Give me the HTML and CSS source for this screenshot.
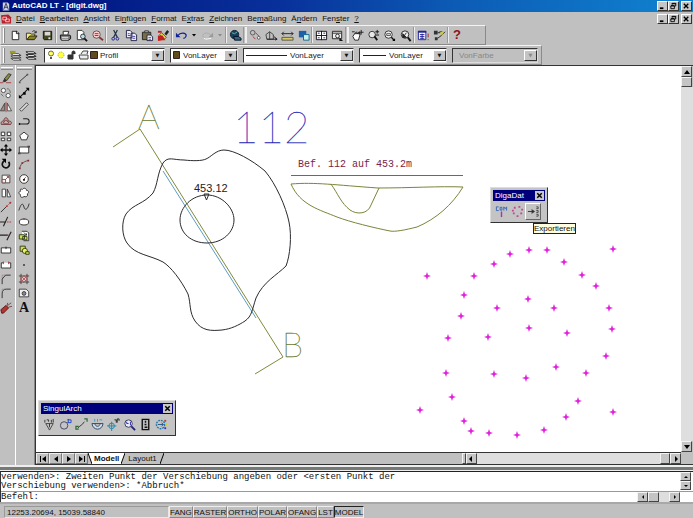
FILE: index.html
```html
<!DOCTYPE html>
<html lang="de">
<head>
<meta charset="utf-8">
<title>AutoCAD LT - [digit.dwg]</title>
<link rel="stylesheet" href="styles.css">
</head>
<body>
<div class="app">
  <header class="titlebar">
    <svg class="app-icon" viewBox="0 0 10 12"><path d="M1 1h6l2 2v8H1z" fill="#c8d0e8"/><path d="M2 10L5 2l3 8M3 7h4" stroke="#223" fill="none"/></svg>
    <h1>AutoCAD LT - [digit.dwg]</h1>
    <div class="winbtns">
      <button aria-label="Minimieren"><svg viewBox="0 0 10 9"><path d="M2 7h4" stroke="#000" stroke-width="2"/></svg></button><button aria-label="Wiederherstellen"><svg viewBox="0 0 10 9"><path d="M3.500 3V1.500h4v3H6M2 4.500h4v3H2zM3 2h5M2 4h4" stroke="#000" fill="none"/></svg></button><button class="close" aria-label="Schließen"><svg viewBox="0 0 10 9"><path d="M2 2l5 5M7 2L2 7" stroke="#000" stroke-width="1.500"/></svg></button>
    </div>
  </header>
  <nav class="menubar">
    <svg class="doc-icon" viewBox="0 0 12 12"><path d="M0 2l8-1 3 3v7H1z" fill="#b8202c"/><path d="M2 4h4v3H2zM5 6h4v3H5z" fill="none" stroke="#f4c8c8"/></svg>
    <button><u>D</u>atei</button><button><u>B</u>earbeiten</button><button><u>A</u>nsicht</button><button>Ei<u>n</u>fügen</button><button><u>F</u>ormat</button><button>E<u>x</u>tras</button><button><u>Z</u>eichnen</button><button>Be<u>m</u>aßung</button><button>Ä<u>n</u>dern</button><button>Fen<u>s</u>ter</button><button><u>?</u></button>
    <div class="winbtns">
      <button aria-label="Minimieren"><svg viewBox="0 0 10 9"><path d="M2 7h4" stroke="#000" stroke-width="2"/></svg></button><button aria-label="Wiederherstellen"><svg viewBox="0 0 10 9"><path d="M3.500 3V1.500h4v3H6M2 4.500h4v3H2zM3 2h5M2 4h4" stroke="#000" fill="none"/></svg></button><button class="close" aria-label="Schließen"><svg viewBox="0 0 10 9"><path d="M2 2l5 5M7 2L2 7" stroke="#000" stroke-width="1.500"/></svg></button>
    </div>
  </nav>

  <div class="toolbar standard">
    <i class="grip"></i>
    <button aria-label="Neu"><svg viewBox="0 0 14 14"><path d="M3.500 2.500h5l2 2v7h-7z" fill="#fff" stroke="#222"/><path d="M8 2v3h3" fill="none" stroke="#222"/></svg></button>
    <button aria-label="Öffnen"><svg viewBox="0 0 14 14"><path d="M1.500 11.500v-7h4l1 1h4v2" fill="#f4ec80" stroke="#333"/><path d="M2 11.500l3-4h8l-3 4z" fill="#8c8420" stroke="#222"/><path d="M8 3c1-2 3-1 4 1m0-2v2h-2" fill="none" stroke="#222"/></svg></button>
    <button aria-label="Speichern"><svg viewBox="0 0 14 14"><path d="M2.500 2.500h9v9h-8l-1-1z" fill="#444822" stroke="#111"/><path d="M4 3h6v4H4z" fill="#d8d8d8"/><path d="M8 9h2v2H8z" fill="#eee"/></svg></button>
    <i class="sep"></i>
    <button aria-label="Drucken"><svg viewBox="0 0 14 14"><path d="M4.500 6V2.500h6L9.500 6" fill="#fff" stroke="#222"/><path d="M1.500 6.500h10l1 1v3l-2 1.500h-8l-1-2z" fill="#777" stroke="#111"/><path d="M3 9h7M3 11h7" stroke="#eee"/></svg></button>
    <button aria-label="Seitenansicht"><svg viewBox="0 0 14 14"><path d="M2.500 1.500h5l2 2v8h-7z" fill="#fff" stroke="#333"/><circle cx="8.500" cy="8" r="2.500" fill="#b8dce8" stroke="#333"/><path d="M10 10l3 3" stroke="#111" stroke-width="2"/></svg></button>
    <button aria-label="Suchen"><svg viewBox="0 0 14 14"><circle cx="6" cy="6" r="4" fill="#fcc" stroke="#555"/><path d="M4 5h4M4 7h4" stroke="#b22"/><path d="M9 9l4 3" stroke="#833" stroke-width="2"/></svg></button>
    <i class="sep"></i>
    <button aria-label="Ausschneiden"><svg viewBox="0 0 14 14"><path d="M5 1l4 8M9 1L5 9" stroke="#234" stroke-width="1.300"/><circle cx="4.500" cy="10.500" r="1.500" fill="none" stroke="#229"/><circle cx="9" cy="10.500" r="1.500" fill="none" stroke="#229"/></svg></button>
    <button aria-label="Kopieren"><svg viewBox="0 0 14 14"><path d="M1.500 1.500h4l2 2v6h-6zM6.500 4.500h4l2 2v6h-6z" fill="#eef" stroke="#224"/><path d="M3 5h2M3 7h3M8 8h3M8 10h3" stroke="#44a"/></svg></button>
    <button aria-label="Einfügen"><svg viewBox="0 0 14 14"><path d="M1.500 3.500h9v8h-9z" fill="#776f48" stroke="#222"/><path d="M4 2h4v2H4z" fill="#ccc" stroke="#333"/><path d="M6.500 6.500h4l2 2v4h-6z" fill="#fff" stroke="#224"/><path d="M8 9h3M8 11h3" stroke="#44a"/></svg></button>
    <button aria-label="Eigenschaften anpassen"><svg viewBox="0 0 14 14"><path d="M8 5l3-4 2 2-3 4z" fill="#222"/><path d="M5 4l5 5-2 2-5-5z" fill="#e8d840" stroke="#554"/><path d="M1 7h5l3 5H6l-5 1z" fill="#c02020"/><path d="M1 2h4v2H1z" fill="#c02020"/></svg></button>
    <i class="sep"></i>
    <button aria-label="Rückgängig"><svg viewBox="0 0 14 14"><path d="M1 4v5h5z" fill="#129"/><path d="M3 7c3-4 9-3 9 0 0 1-1 3-3 3" fill="none" stroke="#129" stroke-width="1.300"/></svg></button>
    <button class="drop" aria-label="Rückgängig Liste"><svg viewBox="0 0 8 14"><path d="M2 6h4L4 8.500z"/></svg></button>
    <button aria-label="Wiederholen"><svg viewBox="0 0 14 14"><path d="M13 4v5H8z" fill="#999"/><path d="M11 7c-3-4-9-3-9 0 0 1 1 3 3 3" fill="none" stroke="#aaa"/><path d="M3 10c3 2 5 0 8 0" fill="none" stroke="#fff"/></svg></button>
    <button class="drop" aria-label="Wiederholen Liste"><svg viewBox="0 0 8 14"><path d="M2 6h4L4 8.500z" fill="#888"/></svg></button>
    <i class="sep"></i>
    <button aria-label="Internet"><svg viewBox="0 0 14 14"><circle cx="6" cy="6" r="4.500" fill="#18405c" stroke="#123"/><path d="M3 4l3 1 3-2" stroke="#6bb" fill="none"/><path d="M5 8h5l3 2v2H6z" fill="#3a6080" stroke="#012"/></svg></button>
    <i class="sep wide"></i>
    <button aria-label="Objektfang"><svg viewBox="0 0 14 14"><circle cx="4" cy="4" r="2.500" fill="none" stroke="#555"/><path d="M7 4l4 4M4 8l3 3" stroke="#a33"/><circle cx="10.500" cy="9.500" r="1.500" fill="#fff" stroke="#555"/></svg></button>
    <button aria-label="BKS"><svg viewBox="0 0 14 14"><path d="M1 6l4-3 4 3v5H2zM5 3v8M9 7l3 4" fill="none" stroke="#444"/><path d="M2 11h11M11 9l2 2-2 1" fill="none" stroke="#222"/></svg></button>
    <button aria-label="Abstand"><svg viewBox="0 0 14 14"><path d="M1 5h12M1 5l2-2M1 5l2 2M13 5l-2-2M13 5l-2 2" stroke="#222"/><path d="M1 9h12v3H1z" fill="#d8c868" stroke="#554"/></svg></button>
    <button aria-label="Zeichnungsreihenfolge"><svg viewBox="0 0 14 14"><path d="M2 2h8v7H2z" fill="#1c60a8"/><path d="M7 6h6v6H7z" fill="#c8f0f0" stroke="#168"/></svg></button>
    <i class="sep"></i>
    <button aria-label="Ansichtsfenster"><svg viewBox="0 0 14 14"><path d="M1.500 2.500h11v9h-11z" fill="#fff" stroke="#111"/><path d="M7 2v10M1 7h12" stroke="#111"/><path d="M3 4.500h2M9 4.500h2M3 9.500h2M9 9.500h2" stroke="#228"/></svg></button>
    <button aria-label="Benannte Ansichten"><svg viewBox="0 0 14 14"><path d="M1.500 2.500h10v8h-10z" fill="#eee" stroke="#222"/><path d="M2 4.500h9" stroke="#222"/><circle cx="7" cy="7.500" r="2" fill="#fff" stroke="#222"/><path d="M9 9l4 4h-4z" fill="#111"/></svg></button>
    <i class="sep wide"></i>
    <button aria-label="Pan"><svg viewBox="0 0 14 14"><path d="M2 8l2-3h6l-2 7H4z" fill="#fff" stroke="#222"/><path d="M4 5l2-2 1 2 2-2v3M1 3h3M11 1v5M8.500 3.500h5" fill="none" stroke="#222"/></svg></button>
    <button aria-label="Zoom Echtzeit"><svg viewBox="0 0 14 14"><circle cx="5.500" cy="6" r="3.500" fill="#e8e8e8" stroke="#333"/><path d="M8 8l3 4" stroke="#111" stroke-width="2"/><path d="M9 3h4M11 1v4M9 6.500h4" stroke="#111"/></svg></button>
    <button aria-label="Zoom Fenster"><svg viewBox="0 0 14 14"><circle cx="6" cy="6" r="4" fill="#eee" stroke="#333"/><path d="M4 5h4v2H4z" fill="none" stroke="#555"/><path d="M9 9l3 3" stroke="#111" stroke-width="1.500"/><path d="M13 10v3h-3z"/></svg></button>
    <button aria-label="Zoom Vorher"><svg viewBox="0 0 14 14"><circle cx="6.500" cy="6" r="4" fill="#eee" stroke="#222"/><path d="M4 5v4h4zM5 8l3-4" fill="#222" stroke="#222"/><path d="M9.500 9l3 4" stroke="#111" stroke-width="2"/></svg></button>
    <i class="sep"></i>
    <button aria-label="Eigenschaften"><svg viewBox="0 0 14 14"><path d="M1.500 2.500h8v9h-8z" fill="#fff" stroke="#229"/><path d="M1 3h9" stroke="#229" stroke-width="2"/><path d="M3 6h5M3 8h5M3 10h5M5.500 5v6" stroke="#229"/><path d="M12 5v4M12 11v1" stroke="#922"/></svg></button>
    <button aria-label="Design Center"><svg viewBox="0 0 14 14"><path d="M1 2h4v4H1zM2 9h3v3H2z" fill="#333"/><path d="M5 4h3M5 10l4-3 4-4M7 3h3" stroke="#222" fill="none"/><path d="M8 3h3v3H8z" fill="#cc4"/></svg></button>
    <i class="sep"></i>
    <button class="help" aria-label="Hilfe">?</button>
  </div>

  <div class="toolbar props">
    <i class="grip"></i>
    <button aria-label="Layer des Objekts"><svg viewBox="0 0 14 14"><path d="M2 5h8l3 2H5zM2 7.500h8l3 2H5zM2 10h8l3 2H5z" fill="#fff" stroke="#444"/><path d="M1 2h6v3H1z" fill="#9a9a30"/></svg></button>
    <button aria-label="Layer"><svg viewBox="0 0 14 14"><path d="M1 3h8l3 2H4zM1 6h8l3 2H4zM1 9h8l3 2H4z" fill="#fff" stroke="#222"/></svg></button>
    <div class="combo layer"><select aria-label="Layer"><option>Profil</option></select>
      <svg class="lead" viewBox="0 0 54 12"><circle cx="6" cy="4.500" r="2.500" fill="#ffff60" stroke="#665"/><path d="M5 8h2v2H5z" fill="#555"/><circle cx="16" cy="6" r="3" fill="#ffff40" stroke="#998" stroke-dasharray="1 1"/><path d="M23 6h5v4h-5zM27 6V3.500c0-2 3-2 3 0V5" fill="#333" stroke="#333"/><path d="M36 5l2-3h5l-1 3M34 6h9v4h-8z" fill="#eee" stroke="#444"/><path d="M45.500 2.500h7v7h-7z" fill="#5f4b1c" stroke="#322"/></svg></div>
    <div class="combo color"><select aria-label="Farbe"><option>VonLayer</option></select>
      <svg class="lead" viewBox="0 0 12 12"><path d="M2.500 2.500h6v7h-6z" fill="#5f4b1c" stroke="#322"/></svg></div>
    <div class="combo ltype"><select aria-label="Linientyp"><option>VonLayer</option></select>
      <svg class="lead" viewBox="0 0 44 12"><path d="M2 6.500h41" stroke="#222"/></svg></div>
    <div class="combo lweight"><select aria-label="Linienstärke"><option>VonLayer</option></select>
      <svg class="lead" viewBox="0 0 28 12"><path d="M3 6.500h23" stroke="#222"/></svg></div>
    <div class="combo pstyle"><select aria-label="Plotstil" disabled><option>VonFarbe</option></select></div>
  </div>

  <main class="work">
    <div class="side modify">
      <i class="hgrip"></i>
      <div class="tools">
      <button aria-label="Löschen"><svg viewBox="0 0 14 14"><path d="M5 8l5-6 3 1-5 7z" fill="#8a8a3c" stroke="#333"/><path d="M5 8l3 2-2 2-3-1z" fill="#333"/><path d="M0 12.500h4M7 12.500h6" stroke="#a33"/></svg></button>
      <button aria-label="Kopieren"><svg viewBox="0 0 14 14"><circle cx="4" cy="4" r="2.500" fill="#fff" stroke="#444"/><circle cx="9.500" cy="10" r="2.500" fill="#fff" stroke="#444"/><path d="M8 2c3 0 4 2 4 5M1 8l3 3" fill="none" stroke="#666"/></svg></button>
      <button aria-label="Spiegeln"><svg viewBox="0 0 14 14"><path d="M5.500 2.500v9h-5z" fill="#a88" stroke="#444"/><path d="M8.500 2.500v9h5z" fill="#eee" stroke="#444"/><path d="M7 1v12" stroke="#a33"/></svg></button>
      <button aria-label="Versetzen"><svg viewBox="0 0 14 14"><path d="M1.500 11c-1-4 2-4 3-4 0-5 5-5 5 0 3 0 5 1 3 4z" fill="#c99" stroke="#633"/><path d="M4 9.500h6c0-2-1-2-2-2 0-2-2-2-2 0-1 0-2 1-2 2z" fill="#eee" stroke="#633"/></svg></button>
      <button aria-label="Reihe"><svg viewBox="0 0 14 14"><path d="M1.500 2.500h4v4h-4zM8.500 2.500h4v4h-4zM1.500 9.500h4v3h-4zM8.500 9.500h4v3h-4z" fill="#fff" stroke="#222"/></svg></button>
      <button aria-label="Schieben"><svg viewBox="0 0 14 14"><path d="M7 2v10M2 7h10" stroke="#111" stroke-width="1.500"/><path d="M7 0l2.500 3h-5zM7 14l2.500-3h-5zM0 7l3-2.500v5zM14 7l-3-2.500v5z"/></svg></button>
      <button aria-label="Drehen"><svg viewBox="0 0 14 14"><path d="M5 3.500a4.200 4.200 0 1 0 5 1" fill="none" stroke="#111" stroke-width="2"/><path d="M2 1h5v5z"/></svg></button>
      <button aria-label="Varia"><svg viewBox="0 0 14 14"><path d="M2.500 2.500h9v9h-9z" fill="#fff" stroke="#433"/><path d="M2.500 7.500h4v4h-4z" fill="#eee" stroke="#744"/><path d="M6 8l4-4M8 4h2v2" fill="none" stroke="#744"/></svg></button>
      <button aria-label="Strecken"><svg viewBox="0 0 14 14"><path d="M2.500 2.500h4v9h-4z" fill="#fff" stroke="#333"/><path d="M8.500 2.500v9h4z" fill="#fff" stroke="#333"/></svg></button>
      <button aria-label="Länge"><svg viewBox="0 0 14 14"><path d="M1 13l7-7" stroke="#222"/><path d="M8 6l4-4" stroke="#a33" stroke-dasharray="1 1"/><circle cx="12" cy="2" r="1.200" fill="#a33"/><circle cx="8" cy="6" r="1" fill="#a33"/></svg></button>
      <button aria-label="Stutzen"><svg viewBox="0 0 14 14"><path d="M0 7h7M4 12L9 1" stroke="#222" stroke-width="1.300"/><path d="M8 7h6" stroke="#a33" stroke-dasharray="2 1"/></svg></button>
      <button aria-label="Dehnen"><svg viewBox="0 0 14 14"><path d="M0 6h9M8 12l5-10" stroke="#222" stroke-width="1.300"/><path d="M8 6h3" stroke="#a33"/></svg></button>
      <button aria-label="Bruch am Punkt"><svg viewBox="0 0 14 14"><path d="M1.500 4.500h11v6h-11z" fill="#fff" stroke="#222"/><path d="M7 3v3" stroke="#222"/></svg></button>
      <button aria-label="Bruch"><svg viewBox="0 0 14 14"><path d="M4 4.500H1.500v6h11v-6H10" fill="#fff" stroke="#222"/><path d="M4 3v3M10 3v3" stroke="#a33"/></svg></button>
      <button aria-label="Fase"><svg viewBox="0 0 14 14"><path d="M2.500 13V7l4-4.500h6" fill="none" stroke="#222"/><path d="M2.500 6V2.500H6" fill="none" stroke="#a55" stroke-dasharray="1 1"/></svg></button>
      <button aria-label="Abrunden"><svg viewBox="0 0 14 14"><path d="M2.500 13V8c0-4 2-5.500 5-5.500h5" fill="none" stroke="#222"/><path d="M2.500 6V2.500H6" fill="none" stroke="#777" stroke-dasharray="1 1"/></svg></button>
      <button aria-label="Ursprung"><svg viewBox="0 0 14 14"><path d="M1 9l6-5 3 3-6 6H2z" fill="#b33434" stroke="#511"/><path d="M8 5l1-4M10 6l4-1M9 4l4-3" stroke="#733"/></svg></button>
      </div>
    </div>
    <div class="side draw">
      <i class="hgrip"></i>
      <div class="tools">
      <button aria-label="Linie"><svg viewBox="0 0 14 14"><path d="M2 11l9-8" stroke="#222"/><path d="M1 11h2v2H1zM10 2h2v2h-2z" fill="#555"/></svg></button>
      <button aria-label="Konstruktionslinie"><svg viewBox="0 0 14 14"><path d="M2 12L12 2" stroke="#111" stroke-width="1.300"/><path d="M1 13V9l4 4zM13 1v4L9 1zM6 6h3v3H6z"/></svg></button>
      <button aria-label="Doppellinie"><svg viewBox="0 0 14 14"><path d="M2 10l8-8 2 2-8 8z" fill="#ddd" stroke="#333"/></svg></button>
      <button aria-label="Polylinie"><svg viewBox="0 0 14 14"><path d="M6 4.500h4c4 0 4 6 0 6H1" fill="none" stroke="#222" stroke-width="1.200"/><path d="M1 9l2 1.500L1 12z"/></svg></button>
      <button aria-label="Polygon"><svg viewBox="0 0 14 14"><path d="M7 2.500l5 4-2 5H4l-2-5z" fill="#fff" stroke="#222"/></svg></button>
      <button aria-label="Rechteck"><svg viewBox="0 0 14 14"><path d="M1.500 3.500h11v7h-11z" fill="#fff" stroke="#222"/><path d="M0 10h3v2H0zM11 2h3v2h-3z" fill="#544"/></svg></button>
      <button aria-label="Bogen"><svg viewBox="0 0 14 14"><path d="M2 13c0-5 4-9 10-10" fill="none" stroke="#733"/><path d="M1 11h2v2H1zM4 5h2v2H4zM11 2h2v2h-2z" fill="#733"/></svg></button>
      <button aria-label="Kreis"><svg viewBox="0 0 14 14"><circle cx="7" cy="7" r="5" fill="#fff" stroke="#222"/><path d="M6 8l3-3" stroke="#733"/><path d="M6 7h2v2H6z"/></svg></button>
      <button aria-label="Revisionswolke"><svg viewBox="0 0 14 14"><path d="M5 3c2-3 5-1 5 1 3 0 3 3 1 4 1 3-2 4-4 3-2 2-5 1-4-2-3-1-2-4 0-4-1-3 1-3 2-2z" fill="#fff" stroke="#222"/></svg></button>
      <button aria-label="Spline"><svg viewBox="0 0 14 14"><path d="M1 11C4 1 6 3 7 7s4 4 6-4" fill="none" stroke="#222"/></svg></button>
      <button aria-label="Ellipse"><svg viewBox="0 0 14 14"><ellipse cx="7" cy="7" rx="5.500" ry="3.500" fill="#fff" stroke="#222"/><path d="M6 3h2v1H6z" fill="#733"/></svg></button>
      <button aria-label="Block einfügen"><svg viewBox="0 0 14 14"><path d="M4.500 1.500h6l2 2v9h-6" fill="#fff" stroke="#222"/><path d="M1.500 5.500h6v5h-6zM5.500 7.500h5v4h-5z" fill="#d4dc50" stroke="#231"/><path d="M7 3l3 3M8 6h2V4" fill="none" stroke="#222"/></svg></button>
      <button aria-label="Block erstellen"><svg viewBox="0 0 14 14"><path d="M2.500 2.500h6v6h-6z" fill="#d4dc50" stroke="#231"/><circle cx="8" cy="8" r="3" fill="#ecf070" stroke="#231"/><path d="M9 9h4v3H9z" fill="#d4dc50" stroke="#231"/></svg></button>
      <button aria-label="Punkt"><svg viewBox="0 0 14 14"><path d="M6 6h2v2H6z" fill="#222"/></svg></button>
      <button aria-label="Schraffur"><svg viewBox="0 0 14 14"><path d="M3 3h8v8H3z" fill="#e0c4c8"/><path d="M3.500 1v12M10.500 1v12M1 3.500h12M1 10.500h12" stroke="#333"/><path d="M3 7l4-4M3 11l8-8M7 11l4-4M3 7l4 4M3 3l8 8M7 3l4 4" stroke="#a55"/></svg></button>
      <button aria-label="Region"><svg viewBox="0 0 14 14"><path d="M1.500 2.500h8l3 3v6h-11z" fill="#eee" stroke="#333"/><circle cx="7" cy="7.500" r="2.200" fill="#889" stroke="#333"/></svg></button>
      <button class="mtext" aria-label="Absatztext">A</button>
      </div>
    </div>

    <section class="view">
      <div class="canvas">
        <svg class="drawing">
          <defs>
            <marker id="pt" viewBox="-4 -4 8 8" markerWidth="8" markerHeight="8" markerUnits="userSpaceOnUse">
              <path d="M0-4L1-1 4 0 1 1 0 4-1 1-4 0-1-1z" fill="#e020dc"/>
            </marker>
          </defs>
          <g transform="translate(-36 -66)" fill="none">
            <path d="M113 147l27-18L283 357l-28 17" stroke="#7f8a3c"/>
            <path d="M163 171l93 147" stroke="#5d9cc0"/>
            <path d="M163 163C168 156 173 160 184 160C193 161 202 161 206 159C211 157 216 150 224 150C234 150 252 160 265 171C276 184 286 207 289 222C292 236 290 256 286 266C277 275 263 282 256 298C252 310 252 316 245 321C239 325 231 329 222 330C211 331 202 331 195 321C189 312 191 304 188 294C181 280 171 267 163 262C150 255 135 255 127 243C122 236 121 222 126 214C133 204 144 204 153 193C158 184 157 174 163 163Z" stroke="#2a2a30"/>
            <path d="M207 195c15 0 27 13 27 25s-11 23-27 23-27-10-27-23 12-25 27-25z" stroke="#2a2a30"/>
            <path d="M204 194h5l-2.500 6z" stroke="#2a2a30"/>
            <path d="M291 175.500h172" stroke="#a04c70"/>
            <path d="M291 184C315 182 335 185 378 188C410 188 440 186 463 187C452 205 436 219 417 227C405 230 395 232 390 231C375 228 350 222 337 217C320 210 300 205 291 184ZM331 184C338 194 341 203 350 210C357 215 368 214 371 205L379 188" stroke="#7c8438"/>
            <polyline class="pts" points="613,249 529,250 547,250 510,254 494,264 564,262 582,275 596,286 427,276 474,276 464,295 528,299 609,308 461,316 497,308 554,308 448,338 488,337 529,328 567,333 612,329 606,356 446,373 494,374 526,378 556,367 586,373 452,397 420,410 464,421 489,433 517,435 544,430 613,412 578,401 566,417 471,431"/>
            <text class="label letter" x="138" y="129">A</text>
            <text class="label letter" x="282" y="357">B</text>
            <text class="label find" x="233" y="143">112</text>
            <text class="label height" x="194" y="192">453.12</text>
            <text class="label note" x="298" y="167">Bef. 112 auf 453.2m</text>
          </g>
        </svg>

        <div class="panel singular">
          <div class="panel-title"><span>SingulArch</span><button aria-label="Schließen"><svg viewBox="0 0 8 8"><path d="M2 2l4 4M6 2L2 6" stroke="#000" stroke-width="1.300"/></svg></button></div>
          <div class="panel-tools">
            <button aria-label="Höhe"><svg viewBox="0 0 14 14"><path d="M3 6h8l-4 7z" fill="none" stroke="#444"/><path d="M2 2v3M4 2h2v2M9 2v3M11 1v4M7 6v4" stroke="#333" fill="none"/></svg></button>
            <button aria-label="Umriss"><svg viewBox="0 0 14 14"><circle cx="5.500" cy="8" r="4" fill="none" stroke="#446"/><path d="M9 2h4v3H9M10 1v4" fill="none" stroke="#24c"/></svg></button>
            <button aria-label="Profil"><svg viewBox="0 0 14 14"><path d="M3 11C5 8 8 8 10 4" stroke="#333" fill="none"/><path d="M10 1h3v3M4 9H1v3h3" fill="none" stroke="#363" stroke-width="1.300"/></svg></button>
            <button aria-label="Schnitt"><svg viewBox="0 0 14 14"><path d="M1 6h12c-1 8-11 8-12 0zM4 6c1 4 5 4 6 0" fill="#cde" stroke="#345"/><path d="M4 1v3M7 1v3M9 2h3" stroke="#39c"/></svg></button>
            <button aria-label="Bezugspunkt"><svg viewBox="0 0 14 14"><circle cx="5" cy="8.500" r="3" fill="none" stroke="#28a"/><path d="M5 4v10M0 8.500h10" stroke="#28a"/><path d="M8 2h2v3M11 5V1h2v2" fill="none" stroke="#222"/></svg></button>
            <button aria-label="Suchen"><svg viewBox="0 0 14 14"><circle cx="6" cy="6" r="4" fill="#eef" stroke="#335"/><path d="M4 4v2h2M8 4v4" stroke="#22a" fill="none"/><path d="M9 9l4 4" stroke="#227" stroke-width="2"/></svg></button>
            <button aria-label="Legende"><svg viewBox="0 0 14 14"><path d="M3.500 1.500h7v11h-7z" fill="#bbb" stroke="#111" stroke-width="1.500"/><path d="M7 3v2M6 7h2M6 10h3" stroke="#111" stroke-width="1.500"/></svg></button>
            <button aria-label="Optionen"><svg viewBox="0 0 14 14"><circle cx="6" cy="7" r="4.500" fill="none" stroke="#27a" stroke-dasharray="2 1" stroke-width="1.500"/><path d="M3 7h6M7 5l2 2-2 2" stroke="#258" fill="none"/><path d="M10 2h2v2h-2z" fill="#c33"/><path d="M11 6h2v2h-2z" fill="#cc3"/><path d="M10 10h2v2h-2z" fill="#33c"/></svg></button>
          </div>
        </div>

        <div class="panel diga">
          <div class="panel-title"><span>DigaDat</span><button aria-label="Schließen"><svg viewBox="0 0 8 8"><path d="M2 2l4 4M6 2L2 6" stroke="#000" stroke-width="1.300"/></svg></button></div>
          <div class="panel-tools">
            <button aria-label="COM"><svg viewBox="0 0 14 14"><path d="M4 2H1.500v4H4M5.500 2.500h2v3h-2zM9.500 6V2l1.500 2 1.500-2v4" fill="none" stroke="#36b"/><path d="M7 7v6" stroke="#a3a" stroke-width="1.500"/></svg></button>
            <button aria-label="Punkte"><svg viewBox="0 0 14 14"><path d="M3 2h2v2H3zM8 1h2v2H8zM11 4h2v2h-2zM10 8h2v2h-2zM6 11h2v2H6zM2 8h2v2H2zM1 5h2v2H1z" fill="#c04890"/></svg></button>
            <button class="hot" aria-label="Exportieren"><svg viewBox="0 0 14 14"><path d="M1 7h6M5 5l3 2-3 2" stroke="#333" fill="#333"/><path d="M10 2h2v2h-2M10 6h2v2h-2M10 10h2v2h-2" fill="none" stroke="#444"/></svg></button>
          </div>
        </div>
        <div class="tip" role="tooltip">Exportieren</div>
      </div>
      <div class="vscroll">
        <button aria-label="Nach oben"><svg viewBox="0 0 8 8"><path d="M1 6h6L4 2z"/></svg></button>
        <b class="thumb"></b>
        <i class="track"></i>
        <button aria-label="Nach unten"><svg viewBox="0 0 8 8"><path d="M1 2h6L4 6z"/></svg></button>
      </div>
      <div class="tabs">
        <div class="tabnav">
          <button aria-label="Erste"><svg viewBox="0 0 8 8"><path d="M1 1h1v6H1zM7 1v6L3 4z"/></svg></button><button aria-label="Zurück"><svg viewBox="0 0 8 8"><path d="M6 1v6L2 4z"/></svg></button><button aria-label="Weiter"><svg viewBox="0 0 8 8"><path d="M2 1v6l4-3z"/></svg></button><button aria-label="Letzte"><svg viewBox="0 0 8 8"><path d="M6 1h1v6H6zM1 1v6l4-3z"/></svg></button>
        </div>
        <svg class="slant" viewBox="0 0 4 11"><path d="M0 0h4v11z" fill="#fff"/><path d="M0 0l4 11" stroke="#000"/></svg>
        <button class="tab on">Modell</button>
        <svg class="slant" viewBox="0 0 4 11"><path d="M4 0H0v11z" fill="#fff"/><path d="M4 0L0 11" stroke="#000"/></svg>
        <button class="tab">Layout1</button>
        <svg class="slant" viewBox="0 0 4 11"><path d="M4 0L0 11" stroke="#000"/></svg>
        <div class="hscroll">
          <b class="split"></b>
          <button aria-label="Nach links"><svg viewBox="0 0 8 8"><path d="M5 1v6L2 4z"/></svg></button>
          <i class="track"></i>
          <b class="thumb"></b>
          <button aria-label="Nach rechts"><svg viewBox="0 0 8 8"><path d="M3 1v6l3-3z"/></svg></button>
        </div>
      </div>
      <i class="corner"></i>
    </section>
  </main>

  <i class="splitter"></i>
  <section class="command">
    <div class="history">
      <p>verwenden&gt;: Zweiten Punkt der Verschiebung angeben oder &lt;ersten Punkt der<br>Verschiebung verwenden&gt;: *Abbruch*</p>
      <div class="vmini"><button aria-label="Nach oben"><svg viewBox="0 0 8 8"><path d="M2 5h4L4 3z"/></svg></button><button aria-label="Nach unten"><svg viewBox="0 0 8 8"><path d="M2 3h4L4 5z"/></svg></button></div>
    </div>
    <div class="prompt">
      <label for="cmd">Befehl:</label><input id="cmd" type="text">
      <div class="hmini"><button aria-label="Nach links"><svg viewBox="0 0 8 8"><path d="M5 2v4L3 4z"/></svg></button><b class="thumb"></b><i class="track"></i><button aria-label="Nach rechts"><svg viewBox="0 0 8 8"><path d="M3 2v4l2-2z"/></svg></button></div>
    </div>
  </section>
  <footer class="status">
    <output>12253.20694, 15039.58840</output>
    <button>FANG</button><button>RASTER</button><button>ORTHO</button><button>POLAR</button><button>OFANG</button><button>LST</button><button class="on">MODEL</button>
  </footer>
</div>
</body>
</html>
```
FILE: styles.css
```css
* { box-sizing: border-box; }
html, body { height: 100%; margin: 0; }
body {
  background: #c0c0c0;
  color: #111;
  font-family: "Liberation Sans", sans-serif;
  font-size: 8px;
  line-height: 11px;
}
button { font: inherit; color: inherit; background: none; border: 0; padding: 0; margin: 0; flex: none; }
svg { display: block; }
i, b { flex: none; }

.app { display: flex; flex-direction: column; height: 100vh; overflow: hidden; }

/* Title and menu */
.titlebar {
  display: flex; align-items: center; height: 12px; padding: 0 1px 0 2px; flex: none;
  background: linear-gradient(90deg, #00107c 0%, #08309a 40%, #0c5ab4 65%, #1084d0 100%);
}
.app-icon { width: 8px; height: 11px; }
h1 { margin: 0 auto 0 2px; color: #fff; font: bold 8px/12px "Liberation Sans", sans-serif; white-space: nowrap; }
.winbtns { display: flex; margin-left: auto; }
.winbtns button { width: 11px; height: 10px; background: #c6c6c6; border: 1px solid; border-color: #fff #333 #333 #fff; }
.winbtns svg { width: 100%; height: 100%; }
.winbtns .close { margin-left: 2px; }
.menubar { display: flex; align-items: center; gap: 5px; height: 13px; padding: 0 1px; flex: none; }
.menubar > svg { width: 11px; height: 12px; margin-right: -1px; }
.menubar > button { white-space: nowrap; }
u { text-underline-offset: 1px; }

/* Toolbars */
.toolbar {
  display: flex; align-items: center; flex: none; align-self: flex-start; height: 20px; padding-left: 2px;
  border: 1px solid; border-color: #f4f4f4 #8a8a8a #8a8a8a #e0e0e0;
}
.toolbar > button { display: grid; place-items: center; width: 16px; height: 16px; }
.toolbar > button svg { width: 13px; height: 13px; }
.toolbar > .drop { width: 10px; }
.toolbar > .drop svg { width: 8px; height: 14px; }
.toolbar > .help { font: bold 13px/16px "Liberation Sans", sans-serif; color: #901020; }
.standard { padding-right: 20px; }
.props { padding-right: 3px; }
.grip { width: 2px; height: 15px; margin-right: 2px; border-left: 1px solid #fff; border-right: 1px solid #888; }
.sep { width: 2px; height: 16px; border-left: 1px solid #999; border-right: 1px solid #eee; }
.sep.wide { width: 4px; border-right-width: 2px; }

.combo { position: relative; height: 15px; flex: none; margin-left: 5px; }
.combo select {
  display: block; appearance: none; width: 100%; height: 100%; margin: 0; padding: 0 0 0 12px;
  font: 8px/11px "Liberation Sans", sans-serif; color: #222;
  background: #fff; border: 1px solid; border-color: #333 #ddd #ddd #333; border-radius: 0;
}
.combo::after {
  content: "▼"; position: absolute; top: 2px; bottom: 2px; right: 1px; width: 11px;
  background: #c4c4c4; border: 1px solid; border-color: #fff #333 #333 #fff;
  font: 5px/9px "DejaVu Sans", sans-serif; text-align: center; pointer-events: none;
}
.lead { position: absolute; left: 1px; top: 1px; height: 12px; pointer-events: none; }
.layer { width: 121px; }
.combo.layer select { padding-left: 55px; }
.layer .lead { width: 54px; }
.color { width: 68px; }
.color .lead { width: 12px; }
.ltype { width: 111px; }
.combo.ltype select { padding-left: 46px; }
.ltype .lead { width: 44px; }
.lweight { width: 88px; }
.combo.lweight select { padding-left: 29px; }
.lweight .lead { width: 28px; }
.pstyle { width: 86px; }
.combo.pstyle select { padding-left: 6px; background: #c0c0c0; color: #888; opacity: 1; }
.pstyle::after { color: #888; }

/* Work area */
.work { display: flex; flex: 1; min-height: 0; }
.side { flex: none; width: 16px; padding-top: 2px; border-right: 1px solid #fff; }
.side.draw { width: 19px; border-right-color: #888; }
.hgrip { display: block; height: 3px; margin: 0 2px 1px 1px; border-top: 1px solid #fff; border-bottom: 1px solid #888; }
.tools { display: grid; grid-template-rows: repeat(17, 1fr); height: 244px; }
.tools button { display: grid; place-items: center; }
.tools svg { width: 12px; height: 12px; }
.modify .tools { margin-right: 3px; }
.draw .tools { margin-right: 2px; }
.tools .mtext { font: bold 14px/14px "Liberation Serif", serif; }

.view {
  display: grid; flex: 1; min-width: 0; grid-template: minmax(0, 1fr) 12px / minmax(0, 1fr) 12px;
  border: 1px solid #333; border-width: 1px 0 1px 1px;
}
.canvas { position: relative; background: #fff; overflow: hidden; }
.drawing { width: 100%; height: 100%; }
.pts { marker: url(#pt); }
.label { font-family: Lato, sans-serif; }
.find { font-size: 44px; font-weight: 100; fill: #2424b8; stroke: #2424b8; stroke-width: .3; }
.letter { font-size: 34px; font-weight: 100; fill: #66782a; stroke: #66782a; stroke-width: .3; }
.height { font: 11px "Liberation Sans", sans-serif; fill: #222; }
.note { font: 10px "Liberation Mono", monospace; fill: #7a2448; }

.vscroll, .hscroll { display: flex; }
.vscroll { flex-direction: column; }
.track { flex: 1; background: #dedede; }
.vscroll button, .hscroll button, .thumb, .split, .vmini button, .hmini button {
  display: grid; place-items: center; background: #c4c4c4;
  border: 1px solid; border-color: #f4f4f4 #444 #444 #f4f4f4;
}
.vscroll button, .hscroll button { width: 11px; height: 11px; }
.vscroll .thumb { width: 11px; height: 10px; }
.hscroll .thumb { width: 10px; height: 11px; }
.split { width: 4px; height: 11px; }
.vscroll svg, .hscroll svg, .tabnav svg, .vmini svg, .hmini svg { width: 8px; height: 8px; }

.tabs { display: flex; min-width: 0; border-top: 1px solid #333; }
.tabnav { display: flex; }
.tabnav button { display: grid; place-items: center; width: 13px; height: 11px; border: 1px solid; border-color: #eee #777 #777 #eee; }
.slant { flex: none; width: 4px; height: 11px; }
.tab { padding: 0 3px; }
.tab.on { padding: 0 2px; background: #fff; font: bold 8px/11px "Liberation Sans", sans-serif; }
.hscroll { width: 34%; margin-left: auto; }
.corner { background: #c0c0c0; }

/* Tool palettes */
.panel {
  position: absolute; background: #c4c4c4; padding: 2px;
  border: 1px solid; border-color: #ddd #333 #333 #ddd;
}
.panel-title { display: flex; align-items: center; justify-content: space-between; height: 11px; padding: 0 1px 0 2px; background: #00007c; color: #fff; }
.panel-title button { width: 9px; height: 9px; background: #c8c8c8; }
.panel-tools { display: flex; padding-top: 2px; }
.panel-tools button { display: grid; place-items: center; width: 16px; height: 17px; }
.panel-tools svg { width: 13px; height: 13px; }
.singular { left: 2px; top: 334px; width: 138px; height: 36px; }
.diga { left: 454px; top: 121px; width: 58px; height: 36px; }
.panel .hot { border: 1px solid; border-color: #fff #666 #666 #fff; }
.tip { position: absolute; left: 497px; top: 157px; padding: 0; background: #ffffe0; border: 1px solid #222; line-height: 9px; }

/* Command line */
.splitter { height: 6px; background: #767a76; border: solid #eee; border-width: 2px 0 1px; }
.command { flex: none; background: #fff; border-top: 1px solid #222; border-left: 1px solid #333; font: 9px/9px "Liberation Mono", monospace; }
.history { display: flex; justify-content: space-between; height: 19px; padding-right: 2px; }
.history p { margin: 0; padding-top: 1px; white-space: nowrap; }
.vmini button { width: 11px; height: 9px; }
.prompt { display: flex; height: 11px; border-top: 1px solid #999; padding-right: 13px; }
.prompt label { line-height: 11px; }
.prompt input { flex: 1; min-width: 0; border: 0; padding: 0; font: inherit; outline: 0; }
.hmini { display: flex; width: 43px; }
.hmini button, .hmini .thumb { width: 11px; height: 10px; }

/* Status bar */
.status { display: flex; flex: none; align-items: center; height: 16px; padding: 2px 2px 1px 4px; border-top: 2px solid #a8a8a8; }
.status output { width: 165px; height: 12px; padding-left: 2px; border: 1px solid; border-color: #999 #e8e8e8 #e8e8e8 #999; }
.status button { height: 12px; padding: 0; border: 1px solid; border-color: #eee #888 #888 #eee; }
.status .on { border-color: #222 #eee #eee #222; }
```
